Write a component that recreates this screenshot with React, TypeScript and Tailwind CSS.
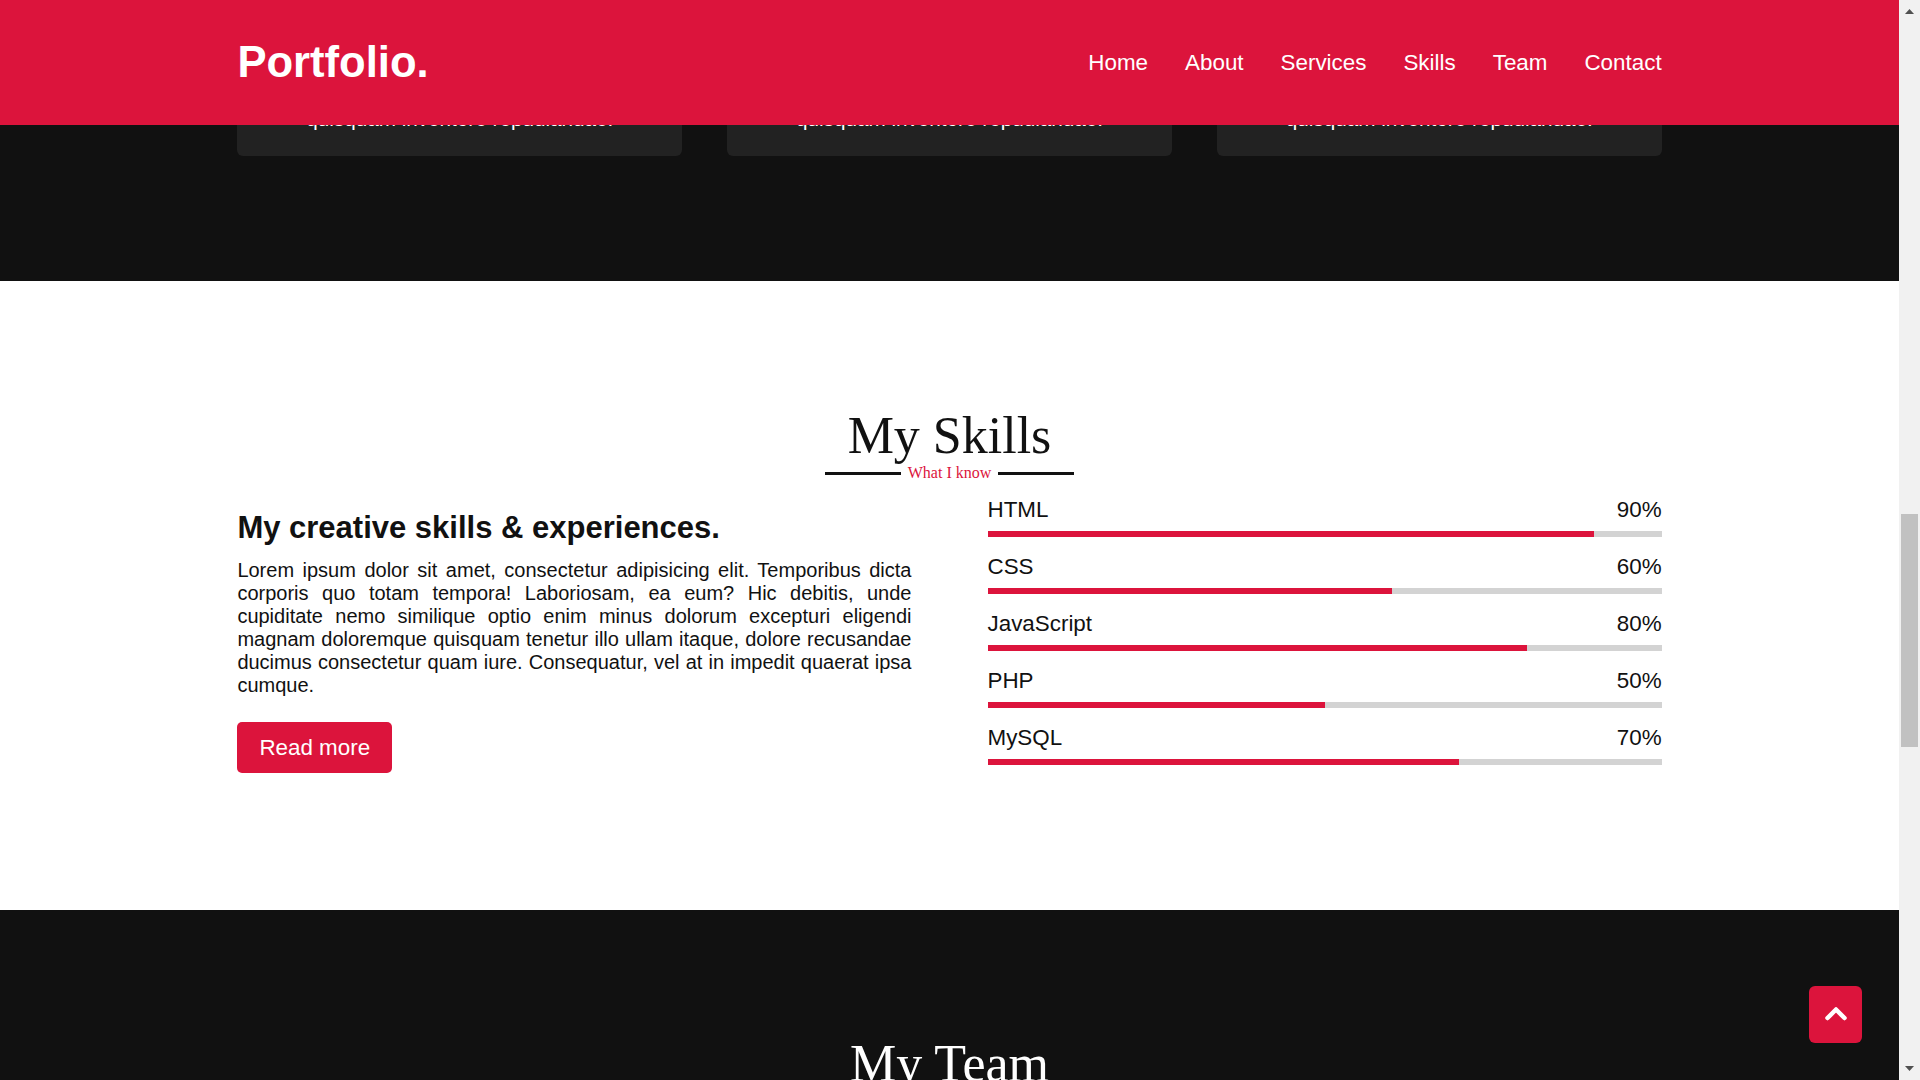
import React from 'react';

const skills = [
    { name: 'HTML', value: 90 },
    { name: 'CSS', value: 60 },
    { name: 'JavaScript', value: 80 },
    { name: 'PHP', value: 50 },
    { name: 'MySQL', value: 70 },
];

const navLinks = ['Home', 'About', 'Services', 'Skills', 'Team', 'Contact'];

const Header: React.FC = () => {
    return (
        <header className="h-[125px] bg-[#dc143c] flex items-center">
            <div className="w-3/4 mx-auto flex items-center justify-between">
                <a href="#" className="text-[43.6px] font-bold text-white">
                    Portfolio.
                </a>
                <nav className="flex items-center gap-[37px]">
                    {navLinks.map((link) => (
                        <a key={link} href="#" className="text-[22.4px] text-white">
                            {link}
                        </a>
                    ))}
                </nav>
            </div>
        </header>
    );
};

// bottom of the services cards, the rest sits under the header
const ServicesTail: React.FC = () => {
    return (
        <section className="h-[156px] bg-[#111]">
            <div className="w-3/4 mx-auto grid grid-cols-3 gap-[45px]">
                {[0, 1, 2].map((i) => (
                    <div
                        key={i}
                        className="h-[31px] overflow-hidden rounded-b-[6px] bg-[#222] flex items-end justify-center pb-[27px]"
                    >
                        <p className="text-[20.7px] leading-[20px] text-white whitespace-nowrap">
                            quisquam inventore repudiandae.
                        </p>
                    </div>
                ))}
            </div>
        </section>
    );
};

const SectionTitle: React.FC<{ title: string; sub: string; dark?: boolean }> = ({ title, sub, dark }) => {
    return (
        <div className="flex flex-col items-center font-['Liberation_Serif',serif]">
            <h2 className={`text-[52px] leading-[56px] ${dark ? 'text-white' : 'text-[#111]'}`}>{title}</h2>
            <div className="flex items-center gap-[7px]">
                <span className={`w-[76px] h-[3px] ${dark ? 'bg-white' : 'bg-[#111]'}`} />
                <span className="text-[16px] leading-[18px] text-[#dc143c]">{sub}</span>
                <span className={`w-[76px] h-[3px] ${dark ? 'bg-white' : 'bg-[#111]'}`} />
            </div>
        </div>
    );
};

const SkillsSection: React.FC = () => {
    return (
        <section className="bg-white pt-[127px] pb-[137px]">
            <SectionTitle title="My Skills" sub="What I know" />
            <div className="w-3/4 mx-auto mt-[15px] flex items-start gap-[76px]">
                <div className="flex-1 pt-[13px]">
                    <h3 className="text-[31px] leading-[36px] font-bold text-[#111] mb-[13px]">
                        My creative skills &amp; experiences.
                    </h3>
                    <p className="text-[20px] leading-[23px] text-[#111] text-justify">
                        Lorem ipsum dolor sit amet, consectetur adipisicing elit. Temporibus dicta corporis quo totam
                        tempora! Laboriosam, ea eum? Hic debitis, unde cupiditate nemo similique optio enim minus
                        dolorum excepturi eligendi magnam doloremque quisquam tenetur illo ullam itaque, dolore
                        recusandae ducimus consectetur quam iure. Consequatur, vel at in impedit quaerat ipsa cumque.
                    </p>
                    <button className="mt-[25px] bg-[#dc143c] text-white text-[22.4px] leading-[26px] px-[22px] py-[12.5px] rounded-[5px]">
                        Read more
                    </button>
                </div>
                <div className="flex-1 flex flex-col gap-[17px]">
                    {skills.map((skill) => (
                        <div key={skill.name}>
                            <div className="flex justify-between text-[22.4px] leading-[26px] text-[#111]">
                                <span>{skill.name}</span>
                                <span>{skill.value}%</span>
                            </div>
                            <div className="mt-[8px] h-[6px] bg-[#d3d3d3]">
                                <div className="h-full bg-[#dc143c]" style={{ width: `${skill.value}%` }} />
                            </div>
                        </div>
                    ))}
                </div>
            </div>
        </section>
    );
};

const TeamSection: React.FC = () => {
    return (
        <section className="bg-[#111] pt-[126px] pb-[100px]">
            <SectionTitle title="My Team" sub="Who we are" dark />
        </section>
    );
};

const ScrollBar: React.FC = () => {
    return (
        <aside className="w-[21px] h-full bg-[#f1f1f1] flex flex-col items-center">
            <svg width="9" height="5" viewBox="0 0 9 5" className="mt-[9px]">
                <polygon points="4.5,0 9,5 0,5" fill="#505050" />
            </svg>
            <div className="mt-[500px] w-[17px] h-[233px] bg-[#c1c1c1]" />
            <div className="flex-1" />
            <svg width="9" height="5" viewBox="0 0 9 5" className="mb-[9px]">
                <polygon points="0,0 9,0 4.5,5" fill="#505050" />
            </svg>
        </aside>
    );
};

const App: React.FC = () => {
    return (
        <div className="h-screen flex overflow-hidden font-['Liberation_Sans',Arial,sans-serif]">
            <main className="flex-1 min-w-0 relative overflow-hidden">
                <Header />
                <ServicesTail />
                <SkillsSection />
                <TeamSection />
                <button className="absolute right-[37px] bottom-[37px] w-[53px] h-[57px] rounded-[6px] bg-[#dc143c] flex items-center justify-center">
                    <svg width="24" height="16" viewBox="0 0 24 16" className="-mt-[3px]">
                        <polyline
                            points="3.5,13 12,4.5 20.5,13"
                            fill="none"
                            stroke="white"
                            strokeWidth="4.5"
                            strokeLinecap="round"
                            strokeLinejoin="round"
                        />
                    </svg>
                </button>
            </main>
            <ScrollBar />
        </div>
    );
};

export default App;
